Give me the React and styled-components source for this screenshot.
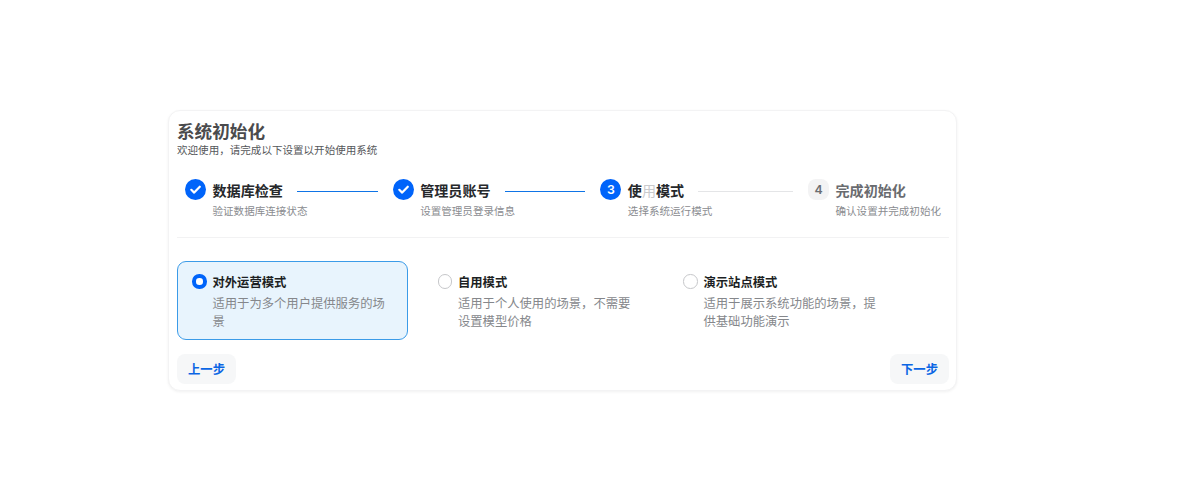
import React from "react";
import styled, { createGlobalStyle } from "styled-components";

const Global = createGlobalStyle`
  html, body { margin: 0; padding: 0; background: #fff; }
  body { font-family: "Noto Sans CJK SC", "Noto Sans", sans-serif; }
  * { box-sizing: border-box; }
`;

const Page = styled.div`
  height: 503px;
  padding-left: 168px;
  display: flex;
  align-items: flex-start;
  padding-top: 110px;
`;

const Card = styled.section`
  width: 789px;
  height: 281px;
  padding: 8px 7px 6px 8px;
  background: #fff;
  border: 1px solid #f3f3f4;
  border-radius: 12px;
  box-shadow: 0 1px 3px rgba(0, 0, 0, 0.06);
  display: flex;
  flex-direction: column;
`;

const Title = styled.h1`
  margin: 0;
  font-size: 17.6px;
  line-height: 23px;
  font-weight: 700;
  color: #4a4b4d;
`;

const Subtitle = styled.p`
  margin: 1px 0 0;
  font-size: 10.56px;
  line-height: 14px;
  color: #55575a;
`;

const Steps = styled.div`
  display: flex;
  margin-top: 22px;
  padding: 0 7px 0 8px;
`;

const Step = styled.div`
  flex: ${(p) => (p.$last ? "0 0 134px" : "1 1 0")};
  display: flex;
  gap: 6.5px;
  padding-right: ${(p) => (p.$last ? 0 : "15px")};
  min-width: 0;
`;

const Dot = styled.div`
  flex: none;
  width: 21px;
  height: 21px;
  display: flex;
  align-items: center;
  justify-content: center;
  font-family: Inter, sans-serif;
  font-size: 12.3px;
  font-weight: 600;
  background: ${(p) => (p.$todo ? "#f3f3f4" : "#0064fa")};
  color: ${(p) => (p.$todo ? "#6b6e72" : "#fff")};
  border-radius: ${(p) => (p.$todo ? "8px" : "50%")};
`;

const StepBody = styled.div`
  flex: 1;
  min-width: 0;
`;

const StepHead = styled.div`
  display: flex;
  align-items: flex-start;
  gap: 14px;
  height: 22px;
  padding-top: 1px;
`;

const StepName = styled.span`
  flex: none;
  font-size: 14.08px;
  line-height: 21px;
  font-weight: 600;
  color: ${(p) => (p.$todo ? "#696b6f" : "#26282b")};
`;

const FadedChar = styled.span`
  color: #c9cacc;
  font-weight: 400;
`;

const Connector = styled.div`
  flex: 1;
  height: 1px;
  margin-top: 11px;
  background: ${(p) => (p.$done ? "#0f74e6" : "#e4e5e7")};
`;

const StepNote = styled.div`
  margin-top: 3px;
  font-size: 10.56px;
  line-height: 14px;
  white-space: nowrap;
  color: #8a8c90;
`;

const Divider = styled.hr`
  margin: 19px 0 0;
  border: 0;
  height: 1px;
  background: #f2f2f3;
`;

const Options = styled.div`
  display: grid;
  grid-template-columns: repeat(3, 231px);
  column-gap: 14.5px;
  margin-top: 23px;
`;

const Option = styled.div`
  height: 79px;
  padding: 11px 15px 0 14px;
  display: flex;
  gap: 6px;
  border-radius: 9px;
  border: 1px solid ${(p) => (p.$active ? "#3b9be8" : "transparent")};
  background: ${(p) => (p.$active ? "#e8f4fd" : "transparent")};
`;

const Radio = styled.span`
  flex: none;
  width: 14.5px;
  height: 14.5px;
  margin-top: 1px;
  border-radius: 50%;
  background: #fff;
  border: ${(p) => (p.$active ? "4.5px solid #0064fa" : "1px solid #c6c7ca")};
`;

const OptionBody = styled.div`
  flex: 1;
  min-width: 0;
`;

const OptionName = styled.div`
  font-size: 12.32px;
  line-height: 18px;
  font-weight: 600;
  color: #1c1f23;
`;

const OptionDesc = styled.div`
  margin-top: 3px;
  font-size: 12.32px;
  line-height: 18px;
  color: #85878b;
`;

const Footer = styled.div`
  margin-top: auto;
  display: flex;
  justify-content: space-between;
`;

const Button = styled.button`
  width: 59px;
  height: 30px;
  padding: 0;
  border: 0;
  border-radius: 8px;
  background: #f6f7f8;
  font-family: inherit;
  font-size: 12.32px;
  font-weight: 700;
  color: #0b66e4;
`;

const Check = () => (
  <svg width="13" height="13" viewBox="0 0 13 13" fill="none">
    <path d="M2.3 6.8 5.2 9.6 10.8 3.7" stroke="#fff" strokeWidth="2.2" strokeLinecap="round" strokeLinejoin="round" />
  </svg>
);

const options = [
  { name: "对外运营模式", desc: "适用于为多个用户提供服务的场景", active: true },
  { name: "自用模式", desc: "适用于个人使用的场景，不需要设置模型价格" },
  { name: "演示站点模式", desc: "适用于展示系统功能的场景，提供基础功能演示" },
];

export default function App() {
  return (
    <>
      <Global />
      <Page>
        <Card>
          <Title>系统初始化</Title>
          <Subtitle>欢迎使用，请完成以下设置以开始使用系统</Subtitle>
          <Steps>
            <Step>
              <Dot><Check /></Dot>
              <StepBody>
                <StepHead><StepName>数据库检查</StepName><Connector $done /></StepHead>
                <StepNote>验证数据库连接状态</StepNote>
              </StepBody>
            </Step>
            <Step>
              <Dot><Check /></Dot>
              <StepBody>
                <StepHead><StepName>管理员账号</StepName><Connector $done /></StepHead>
                <StepNote>设置管理员登录信息</StepNote>
              </StepBody>
            </Step>
            <Step>
              <Dot>3</Dot>
              <StepBody>
                <StepHead><StepName>使<FadedChar>用</FadedChar>模式</StepName><Connector /></StepHead>
                <StepNote>选择系统运行模式</StepNote>
              </StepBody>
            </Step>
            <Step $last>
              <Dot $todo>4</Dot>
              <StepBody>
                <StepHead><StepName $todo>完成初始化</StepName></StepHead>
                <StepNote>确认设置并完成初始化</StepNote>
              </StepBody>
            </Step>
          </Steps>
          <Divider />
          <Options>
            {options.map((o) => (
              <Option key={o.name} $active={o.active}>
                <Radio $active={o.active} />
                <OptionBody>
                  <OptionName>{o.name}</OptionName>
                  <OptionDesc>{o.desc}</OptionDesc>
                </OptionBody>
              </Option>
            ))}
          </Options>
          <Footer>
            <Button>上一步</Button>
            <Button>下一步</Button>
          </Footer>
        </Card>
      </Page>
    </>
  );
}
